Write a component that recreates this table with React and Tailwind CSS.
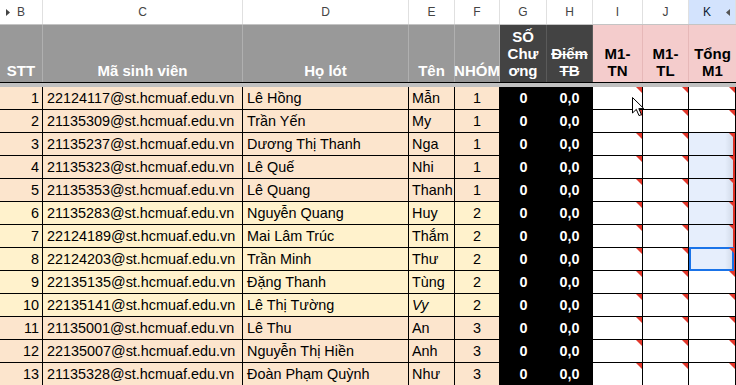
import React from "react";

const cols = "grid grid-cols-[43px_200px_166px_46px_45px_47px_46px_50px_46px_47px]";

const rows = [
  [1, "22124117", "Lê Hồng", "Mẫn", 1],
  [2, "21135309", "Trần Yến", "My", 1],
  [3, "21135237", "Dương Thị Thanh", "Nga", 1],
  [4, "21135323", "Lê Quế", "Nhi", 1],
  [5, "21135353", "Lê Quang", "Thanh", 1],
  [6, "21135283", "Nguyễn Quang", "Huy", 2],
  [7, "22124189", "Mai Lâm Trúc", "Thắm", 2],
  [8, "22124203", "Trần Minh", "Thư", 2],
  [9, "22135135", "Đặng Thanh", "Tùng", 2],
  [10, "22135141", "Lê Thị Tường", "Vy", 2],
  [11, "21135001", "Lê Thu", "An", 3],
  [12, "22135007", "Nguyễn Thị Hiền", "Anh", 3],
  [13, "21135328", "Đoàn Phạm Quỳnh", "Như", 3],
];

function Note() {
  return (
    <span className="absolute right-0 top-0 w-0 h-0 border-t-[6px] border-l-[6px] border-t-[#e2382c] border-l-transparent" />
  );
}

function ScoreCell({ selected, active }) {
  return (
    <div className={`relative border-r border-black ${selected ? "bg-[#e6eefc]" : "bg-white"}`}>
      {selected && (
        <>
          <span className="absolute right-[2px] top-0 bottom-0 w-[8px] bg-gradient-to-r from-transparent to-[#c9d2e0]/70" />
          <span className="absolute right-0 top-0 bottom-[-1px] w-[2px] bg-[#d93025]" />
        </>
      )}
      {active && <span className="absolute left-0 top-[-1px] right-[1px] bottom-[-1px] border-2 border-[#1a73e8]" />}
      <Note />
    </div>
  );
}

export default function App() {
  const letters = ["B", "C", "D", "E", "F", "G", "H", "I", "J", "K"];
  return (
    <div className="w-[736px] h-[385px] overflow-hidden bg-white relative font-['Liberation_Sans',Arial,sans-serif] text-black">
      {/* column letters */}
      <div className={`${cols} h-[25px] border-b border-[#c4c4c4] text-[12px] text-[#444]`}>
        {letters.map((l) => (
          <div
            key={l}
            className={`relative flex items-center justify-center border-r border-[#e0e0e0] ${
              l === "K" ? "bg-[#d3e3fd] text-[#0b1a33] pr-[10px]" : ""
            }`}
          >
            {l === "B" && (
              <svg className="absolute left-[6px] top-[9px]" width="4" height="7" viewBox="0 0 4 7">
                <path d="M0 0 L4 3.5 L0 7 Z" fill="#444" />
              </svg>
            )}
            {l}
            {l === "K" && (
              <svg className="absolute right-[5px] top-[9px]" width="4" height="7" viewBox="0 0 4 7">
                <path d="M4 0 L0 3.5 L4 7 Z" fill="#555" />
              </svg>
            )}
          </div>
        ))}
      </div>

      {/* header row */}
      <div className={`${cols} h-[58px] border-b border-black text-[15px] font-bold leading-[17px]`}>
        <div className="bg-[#999] text-white flex items-end justify-center pb-[3px] border-r border-[#b0b0b0]">STT</div>
        <div className="bg-[#999] text-white flex items-end justify-center pb-[3px] border-r border-[#b0b0b0]">Mã sinh viên</div>
        <div className="bg-[#999] text-white flex items-end justify-center pb-[3px] border-r border-[#b0b0b0]">Họ lót</div>
        <div className="bg-[#999] text-white flex items-end justify-center pb-[3px] border-r border-[#b0b0b0]">Tên</div>
        <div className="bg-[#999] text-white flex items-end justify-center pb-[3px] border-r border-[#b0b0b0] whitespace-nowrap overflow-visible">NHÓM</div>
        <div className="bg-[#434343] text-white flex items-end justify-center text-center pb-[3px] border-r border-[#5a5a5a]">
          SỐ<br />Chư<br />ơng
        </div>
        <div className="bg-[#434343] text-white flex items-end justify-center text-center pb-[3px] border-r border-[#5a5a5a] line-through">
          Điểm<br />TB
        </div>
        <div className="bg-[#f4cccc] flex items-end justify-center text-center pb-[3px] border-r border-[#e6b8b8]">
          M1-<br />TN
        </div>
        <div className="bg-[#f4cccc] flex items-end justify-center text-center pb-[3px] border-r border-[#e6b8b8]">
          M1-<br />TL
        </div>
        <div className="bg-[#f4cccc] flex items-end justify-center text-center pb-[3px]">
          Tổng<br />M1
        </div>
      </div>

      {/* frozen divider */}
      <div className="h-[4px] bg-[#c0c0c0]" />

      {/* data rows */}
      {rows.map(([n, id, ho, ten, nhom]) => {
        const bg = n >= 6 && n <= 10 ? "bg-[#fff2cc]" : "bg-[#fce5cd]";
        return (
          <div key={n} className={`${cols} h-[23px] border-b border-black text-[14.4px] leading-none`}>
            <div className={`${bg} border-r border-black flex items-center justify-end pr-[3px] pt-[1px]`}>{n}</div>
            <div className={`${bg} border-r border-black flex items-center pl-[4px] pt-[1px] whitespace-nowrap overflow-hidden`}>
              {id}@st.hcmuaf.edu.vn
            </div>
            <div className={`${bg} border-r border-black flex items-center pl-[4px] pt-[1px] whitespace-nowrap overflow-hidden`}>{ho}</div>
            <div className={`${bg} border-r border-black flex items-center pl-[3px] pt-[1px] whitespace-nowrap overflow-hidden ${n === 10 ? "italic" : ""}`}>
              {ten}
            </div>
            <div className={`${bg} border-r border-black flex items-center justify-center pt-[1px]`}>{nhom}</div>
            <div className="bg-black text-white font-bold flex items-center justify-center pt-[1px]">0</div>
            <div className="bg-black text-white font-bold flex items-center justify-center pt-[1px] border-r border-black">0,0</div>
            <ScoreCell />
            <ScoreCell />
            <ScoreCell selected={n >= 3 && n <= 8} active={n === 8} />
          </div>
        );
      })}

      {/* mouse pointer */}
      <svg className="absolute left-[632px] top-[97px]" width="13" height="20" viewBox="0 0 13 20">
        <path d="M0.5 0.5 L0.5 16 L4.3 12.4 L7 18.6 L9.4 17.6 L6.8 11.6 L11.8 11.6 Z" fill="white" stroke="black" strokeWidth="1" strokeLinejoin="round" />
      </svg>
    </div>
  );
}
